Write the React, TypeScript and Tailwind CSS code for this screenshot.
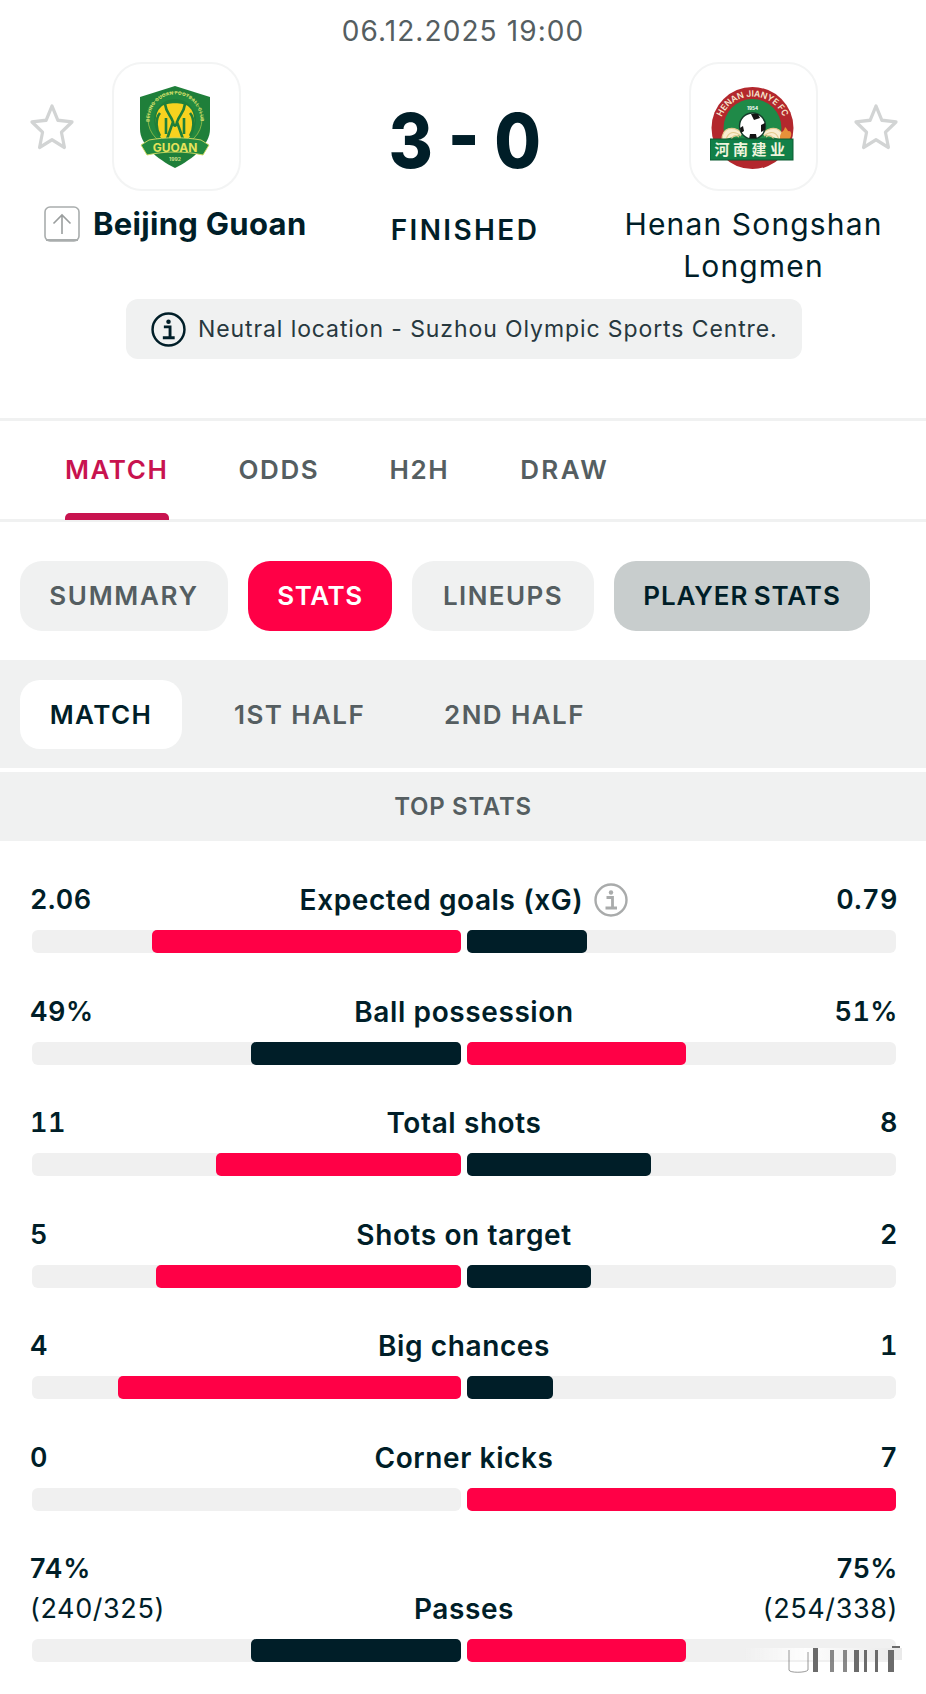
const font = { fontFamily: 'Inter, "Noto Sans CJK SC", sans-serif' };

const stats = [
  { home: '2.06', label: 'Expected goals (xG)', away: '0.79', left: 72, right: 28, leftRed: true, info: true },
  { home: '49%', label: 'Ball possession', away: '51%', left: 49, right: 51, leftRed: false },
  { home: '11', label: 'Total shots', away: '8', left: 57, right: 43, leftRed: true },
  { home: '5', label: 'Shots on target', away: '2', left: 71, right: 29, leftRed: true },
  { home: '4', label: 'Big chances', away: '1', left: 80, right: 20, leftRed: true },
  { home: '0', label: 'Corner kicks', away: '7', left: 0, right: 100, leftRed: false },
];

function StarIcon() {
  return (
    <svg width="46" height="50" viewBox="0 0 44 44" preserveAspectRatio="none" className="shrink-0">
      <path
        d="M22 3.5l5.6 12.6 13.6 1.4-10.2 9.1 2.9 13.4L22 33.2 10.1 40l2.9-13.4L2.8 17.5l13.6-1.4z"
        fill="none"
        stroke="#d2d4d4"
        strokeWidth="3"
        strokeLinejoin="round"
      />
    </svg>
  );
}

function UpIcon() {
  return (
    <svg width="36" height="36" viewBox="0 0 36 36" className="shrink-0">
      <rect x="1" y="1" width="34" height="34" rx="5" fill="#fff" stroke="#a9adad" strokeWidth="1.6" />
      <path d="M2 34h32" stroke="#a9adad" strokeWidth="2" />
      <path d="M18 28V9M9.5 17.5L18 9l8.5 8.5" fill="none" stroke="#9a9e9e" strokeWidth="1.6" />
    </svg>
  );
}

function InfoIcon({ color, size }: { color: string; size: number }) {
  return (
    <svg width={size} height={size} viewBox="0 0 34 34" className="shrink-0">
      <circle cx="17" cy="17" r="15.5" fill="none" stroke={color} strokeWidth="2.4" />
      <circle cx="17" cy="9.5" r="2.2" fill={color} />
      <path d="M12.5 14.5H18.5V24M11.5 25H23" fill="none" stroke={color} strokeWidth="2.8" />
    </svg>
  );
}

function GuoanLogo() {
  return (
    <svg width="72" height="84" viewBox="0 0 72 84" className="mr-[3px]">
      <defs>
        <path id="guoan-arc" d="M11.5 42A25.5 25.5 0 1 1 60.5 42" />
      </defs>
      <path d="M36 1L71 12V44C71 60 54 74 36 83C18 74 1 60 1 44V12Z" fill="#1f7f3a" />
      <circle cx="36" cy="34" r="27" fill="#23893f" stroke="#9cc04a" strokeWidth="0.8" />
      <text fontSize="4.6" fontWeight="700" letterSpacing="0.3" fill="#d8e070" style={font}>
        <textPath href="#guoan-arc" startOffset="50%" textAnchor="middle">
          BEIJING GUOAN FOOTBALL CLUB
        </textPath>
      </text>
      <circle cx="36" cy="35" r="21" fill="#1f7f3a" />
      <path d="M22 22C27 17 45 17 50 22C57 28 57 42 50 53H22C15 42 15 28 22 22Z" fill="#f7d21f" />
      <path
        d="M26 19C27 28 32 30 34 37L28 54M46 19C45 28 40 30 38 37L44 54M34 37C35 42 37 42 38 37M21 28C16 34 17 45 21 51M51 28C56 34 55 45 51 51M27 33V49M45 33V49"
        fill="none"
        stroke="#1f7f39"
        strokeWidth="2.6"
      />
      <path d="M2 60L10 55C26 52 46 52 62 55L70 60L64 70C46 66 26 66 8 70Z" fill="#23893f" stroke="#d6dc63" strokeWidth="0.9" />
      <text x="36" y="66.5" textAnchor="middle" fontSize="12" fontWeight="700" fill="#e6e25a" style={font}>
        GUOAN
      </text>
      <text x="36" y="76" textAnchor="middle" fontSize="5" fontWeight="700" fill="#cfe08a" style={font}>
        1992
      </text>
    </svg>
  );
}

function HenanLogo() {
  return (
    <svg width="86" height="86" viewBox="0 0 86 86" className="mr-[2px]">
      <defs>
        <path id="henan-arc" d="M9 46A33.5 33.5 0 0 1 76 46" />
      </defs>
      <circle cx="42.5" cy="44" r="41" fill="#b3272d" />
      <circle cx="42.5" cy="44" r="29" fill="#1f8a48" />
      <text fontSize="8.6" fontWeight="600" fill="#f6e7cf" style={font}>
        <textPath href="#henan-arc" startOffset="50%" textAnchor="middle">
          HENAN JIANYE FC
        </textPath>
      </text>
      <text x="42.5" y="26" textAnchor="middle" fontSize="4.6" fontWeight="700" fill="#fff" style={font}>
        1954
      </text>
      <g fill="none" stroke="#e3c98e" strokeWidth="1.2">
        <path d="M12 56C12 44 22 40 34 50" fill="#f8ecd0" />
        <path d="M16 56C18 48 24 46 31 52M21 56C22 52 26 50 29 53" />
        <path d="M73 56C73 44 63 40 51 50" fill="#f8ecd0" />
        <path d="M69 56C67 48 61 46 54 52M64 56C63 52 59 50 56 53" />
      </g>
      <path d="M70 52C72 46 74 48 75 43C78 45 77 48 80 47C83 50 80 55 78 57H70Z" fill="#e8913a" />
      <circle cx="42.5" cy="42" r="13" fill="#fff" stroke="#143c2a" strokeWidth="1.4" />
      <path d="M41 30L48 30L50 34L44 36ZM51 41L55 39L55 46L51 48ZM30 44L33 42L34 47L31 49ZM40 50H46L47 55H39Z" fill="#141414" />
      <rect x="0" y="55" width="83" height="21" fill="#118048" stroke="#0c5d33" strokeWidth="1" />
      <text x="41.5" y="71" textAnchor="middle" fontSize="15" fontWeight="700" letterSpacing="3.5" fill="#eef4dc" style={font}>
        河南建业
      </text>
    </svg>
  );
}

function Bar({ pct, red, side }: { pct: number; red: boolean; side: 'left' | 'right' }) {
  return (
    <div className={side === 'left' ? 'flex flex-1 justify-end rounded-[6px] bg-[#f0f0f0]' : 'flex flex-1 justify-start rounded-[6px] bg-[#f0f0f0]'}>
      <div
        className={red ? 'h-full rounded-[5px] bg-[#ff0046]' : 'h-full rounded-[5px] bg-[#001e28]'}
        style={{ width: `${pct}%` }}
      />
    </div>
  );
}

function StatRow({ stat }: { stat: (typeof stats)[number] }) {
  return (
    <div className="flex flex-col">
      <div className="mx-[-2px] flex h-[36px] items-center justify-between text-[28px] font-semibold leading-[36px] tracking-[0.6px] text-[#001e28]">
        <span className="w-[140px] text-[27px] tracking-[0.5px] tabular-nums">{stat.home}</span>
        <span className="flex items-center gap-[11px]">
          {stat.label}
          {stat.info ? <InfoIcon color="#a9abab" size={34} /> : null}
        </span>
        <span className="w-[140px] text-right text-[27px] tracking-[0.5px] tabular-nums">{stat.away}</span>
      </div>
      <div className="mt-[12px] flex h-[23px] gap-[6px]">
        <Bar pct={stat.left} red={stat.leftRed} side="left" />
        <Bar pct={stat.right} red={!stat.leftRed} side="right" />
      </div>
    </div>
  );
}

export default function App() {
  return (
    <div className="relative h-[1694px] w-[926px] overflow-hidden bg-white" style={font}>
      {/* match header */}
      <div className="flex flex-col items-center border-b-[3px] border-[#f0f1f1] pt-[11px] pb-[59px]">
        <div className="text-[28px] leading-[40px] tracking-[1.1px] text-[#555e61]">06.12.2025 19:00</div>
        <div className="mt-[11px] grid w-full grid-cols-[352px_226px_348px]">
          <div className="flex flex-col">
            <div className="flex items-center gap-[37px] pl-[29px]">
              <StarIcon />
              <div className="flex h-[129px] w-[129px] items-center justify-center rounded-[30px] border-2 border-[#f3f4f4]">
                <GuoanLogo />
              </div>
            </div>
            <div className="mt-[12px] flex items-center gap-[13px] pl-[44px]">
              <UpIcon />
              <span className="text-[31px] font-bold leading-[42px] tracking-[0.3px] text-[#001e28]">Beijing Guoan</span>
            </div>
          </div>
          <div className="flex flex-col items-center">
            <div className="mt-[38px] flex h-[80px] scale-x-[0.89] items-center text-[76px] font-extrabold leading-[80px] text-[#001e28]">
              3 - 0
            </div>
            <div className="mt-[33px] text-[28px] font-semibold leading-[34px] tracking-[2.4px] text-[#001e28]">FINISHED</div>
          </div>
          <div className="flex flex-col">
            <div className="flex items-center gap-[35px] pl-[111px]">
              <div className="flex h-[129px] w-[129px] items-center justify-center rounded-[30px] border-2 border-[#f3f4f4]">
                <HenanLogo />
              </div>
              <StarIcon />
            </div>
            <div className="mt-[12px] ml-[3px] text-center text-[30px] leading-[42px] tracking-[1.15px] text-[#001e28]">
              Henan Songshan
              <br />
              Longmen
            </div>
          </div>
        </div>
        <div className="mt-[12px] ml-[2px] flex h-[60px] w-[676px] items-center gap-[12px] rounded-[12px] bg-[#f0f1f1] pl-[25px]">
          <InfoIcon color="#001e28" size={35} />
          <span className="text-[23px] tracking-[0.9px] text-[#27383e]">Neutral location - Suzhou Olympic Sports Centre.</span>
        </div>
      </div>

      {/* main tabs */}
      <div className="flex h-[101px] border-b-[3px] border-[#f0f1f1] pl-[65px] text-[26px] font-semibold tracking-[1.6px] text-[#555e61]">
        <div className="relative flex items-center pb-[2px] text-[#c8134f]">
          MATCH
          <div className="absolute right-0 bottom-[-1px] left-0 h-[7px] rounded-t-[5px] bg-[#c8134f]" />
        </div>
        <div className="ml-[70px] flex items-center pb-[2px]">ODDS</div>
        <div className="ml-[70px] flex items-center pb-[2px]">H2H</div>
        <div className="ml-[71px] flex items-center pb-[2px] tracking-[2.4px]">DRAW</div>
      </div>

      {/* sub tabs */}
      <div className="flex gap-[20px] px-[20px] pt-[39px] pb-[29px] text-[26px] font-semibold tracking-[1.4px]">
        <div className="flex h-[70px] w-[208px] items-center justify-center rounded-[22px] bg-[#f0f1f1] pb-[2px] tracking-[1.7px] text-[#555e61]">SUMMARY</div>
        <div className="flex h-[70px] w-[144px] items-center justify-center rounded-[22px] bg-[#ff0046] pb-[2px] tracking-[0.6px] text-white">STATS</div>
        <div className="flex h-[70px] w-[182px] items-center justify-center rounded-[22px] bg-[#f0f1f1] pb-[2px] text-[#555e61]">LINEUPS</div>
        <div className="flex h-[70px] w-[256px] items-center justify-center rounded-[22px] bg-[#c8cdcd] pb-[2px] tracking-[0.9px] text-[#001e28] [word-spacing:-2px]">PLAYER STATS</div>
      </div>

      {/* period switch */}
      <div className="flex h-[108px] items-center bg-[#f0f1f1] pl-[20px] text-[26px] font-semibold tracking-[1.4px] text-[#555e61]">
        <div className="flex h-[69px] w-[162px] items-center justify-center rounded-[20px] bg-white text-[#001e28]">MATCH</div>
        <div className="ml-[52px]">1ST HALF</div>
        <div className="ml-[79px]">2ND HALF</div>
      </div>
      <div className="mt-[4px] flex h-[69px] items-center justify-center bg-[#f0f1f1] text-[24px] font-semibold tracking-[0.7px] text-[#555e61]">
        TOP STATS
      </div>

      {/* stat rows */}
      <div className="flex flex-col gap-[40.5px] pt-[41px] pr-[30px] pl-[32px]">
        {stats.map((stat) => (
          <StatRow key={stat.label} stat={stat} />
        ))}
        <div className="flex flex-col">
          <div className="mx-[-2px] text-[27px] font-semibold leading-[36px] tracking-[0.6px] text-[#001e28]">
            <div className="flex justify-between">
              <span>74%</span>
              <span>75%</span>
            </div>
            <div className="mt-[4px] flex items-center justify-between">
              <span className="w-[200px] font-normal">(240/325)</span>
              <span className="text-[28px]">Passes</span>
              <span className="w-[200px] text-right font-normal">(254/338)</span>
            </div>
          </div>
          <div className="mt-[12px] flex h-[23px] gap-[6px]">
            <Bar pct={49} red={false} side="left" />
            <Bar pct={51} red side="right" />
          </div>
        </div>
      </div>

      {/* smeared watermark in the corner */}
      <div className="pointer-events-none absolute right-[24px] bottom-[20px] blur-[0.7px]">
        <svg width="160" height="36" viewBox="0 0 160 36">
          <defs>
            <linearGradient id="smear" x1="0" x2="1" y1="0" y2="0">
              <stop offset="0" stopColor="#fff" stopOpacity="0" />
              <stop offset="0.4" stopColor="#fff" stopOpacity="0.9" />
              <stop offset="1" stopColor="#e8e8e8" stopOpacity="0.9" />
            </linearGradient>
          </defs>
          <rect x="0" y="10" width="160" height="12" fill="url(#smear)" />
          <path d="M47 12V32C47 35 64 35 66 32V14" fill="none" stroke="#555" strokeWidth="1" opacity="0.6" />
          <g fill="#6b6b6b">
            <rect x="71" y="10" width="5" height="24" />
            <rect x="88" y="12" width="4" height="22" opacity="0.8" />
            <rect x="101" y="12" width="4" height="22" opacity="0.8" />
            <rect x="112" y="12" width="5" height="22" />
            <rect x="122" y="12" width="3" height="22" />
            <rect x="133" y="12" width="3" height="22" />
            <rect x="146" y="12" width="6" height="22" />
            <rect x="150" y="8" width="8" height="2" />
          </g>
        </svg>
      </div>
    </div>
  );
}
